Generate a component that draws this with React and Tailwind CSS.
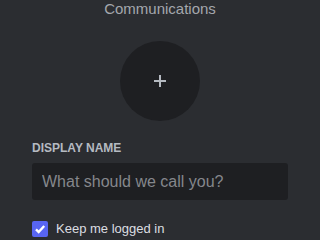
import React from "react";

function App() {
  const [remember, setRemember] = React.useState(true);

  return (
    <div className="w-[320px] h-[240px] overflow-hidden bg-[#2b2d31] font-['Liberation_Sans',Arial,sans-serif]">
      <div className="flex flex-col items-center">
        <h2 className="-mt-[3px] text-[15px] leading-[24px] text-[#a4a7ad]">Communications</h2>
        <button className="mt-[20px] w-[80px] h-[80px] rounded-full bg-[#1e1f22] flex items-center justify-center">
          <svg width="14" height="14" viewBox="0 0 14 14">
            <path d="M7 1v12M1 7h12" stroke="#b5bac1" strokeWidth="2" />
          </svg>
        </button>
      </div>

      <div className="px-[32px] mt-[19px]">
        <label className="block text-[12px] leading-[16px] font-bold uppercase text-[#b5bac1]">
          Display Name
        </label>
        <input
          className="mt-[7px] w-full h-[37px] rounded-[3px] bg-[#1e1f22] px-[10px] text-[16px] text-[#dbdee1] placeholder-[#85878c] outline-none"
          placeholder="What should we call you?"
        />

        <label className="mt-[21px] flex items-center gap-[8px] cursor-pointer">
          <span
            onClick={() => setRemember(!remember)}
            className="w-[16px] h-[16px] rounded-[2px] bg-[#5865f2] flex items-center justify-center"
          >
            {remember && (
              <svg width="12" height="12" viewBox="0 0 12 12">
                <path d="M2 6.3l2.7 2.7L10.2 3" stroke="white" strokeWidth="2.4" fill="none" />
              </svg>
            )}
          </span>
          <span className="text-[13px] leading-[16px] text-[#dbdee1]">Keep me logged in</span>
        </label>
      </div>
    </div>
  );
}

export default App;
